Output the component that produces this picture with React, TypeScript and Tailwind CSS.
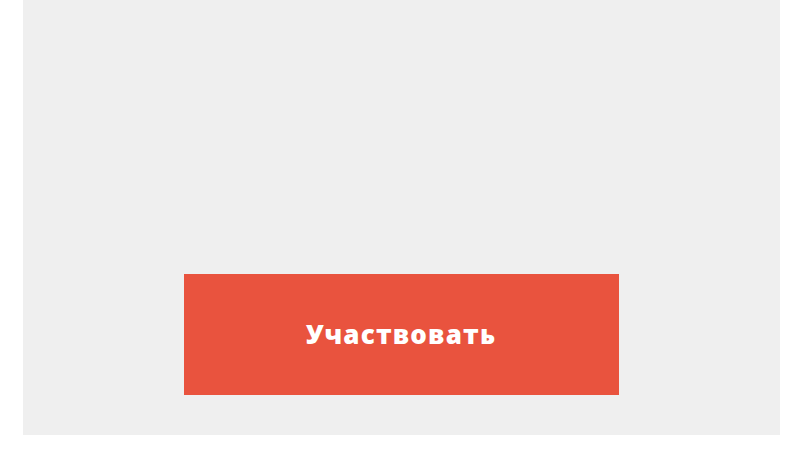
import React from 'react';

export default function App() {
  return (
    <div className="w-[800px] h-[450px] bg-white">
      <div className="ml-[23px] w-[757px] h-[435px] bg-[#efefef] flex flex-col items-center justify-end pb-[40px]">
        <button
          type="button"
          className="w-[435px] h-[121px] bg-[#e9533e] text-white font-extrabold text-[26px] tracking-[1.2px] flex items-center justify-center pr-[1px]"
          style={{ fontFamily: '"Open Sans", "Liberation Sans", sans-serif' }}
        >
          Участвовать
        </button>
      </div>
    </div>
  );
}
